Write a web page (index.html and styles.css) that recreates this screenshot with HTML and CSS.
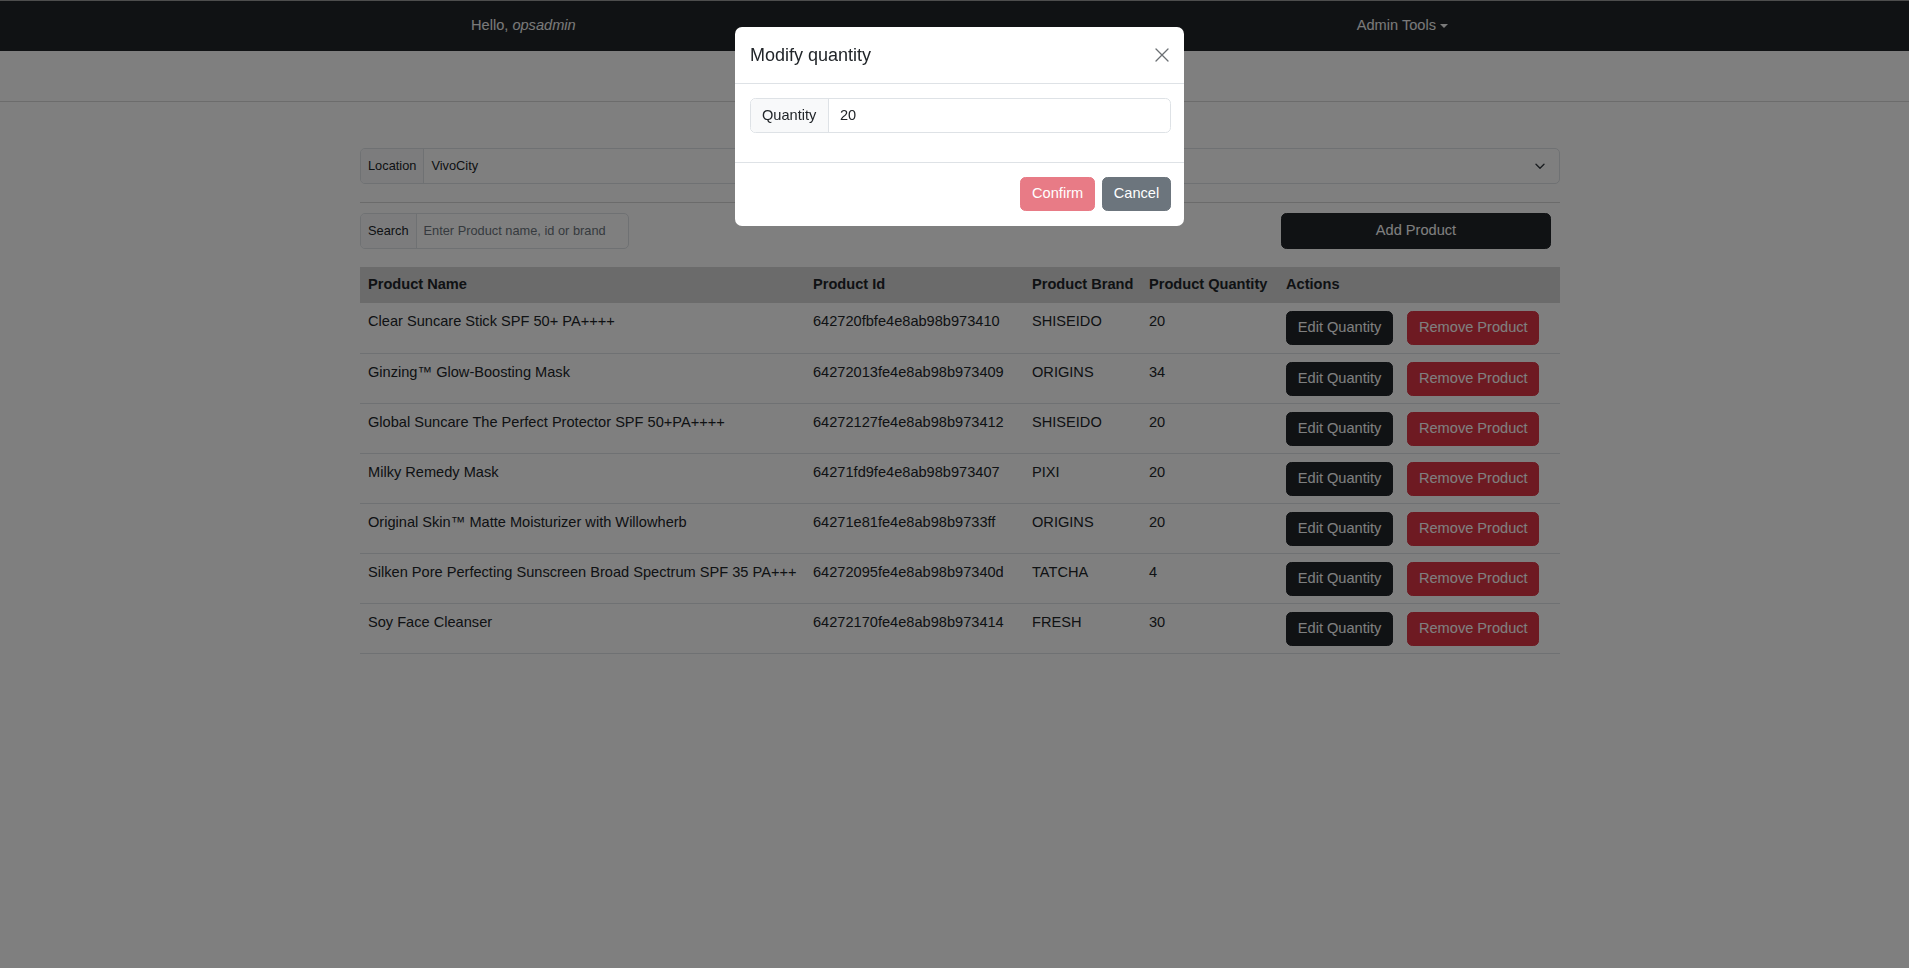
FILE: index.html
```html
<!DOCTYPE html>
<html lang="en">
<head>
<meta charset="utf-8">
<title>Inventory</title>
<link rel="stylesheet" href="styles.css">
</head>
<body>
<nav class="navbar">
  <span class="nav-text">Hello, <em>opsadmin</em></span>
  <span class="nav-text dropdown">Admin Tools <span class="caret"></span></span>
</nav>
<div class="subbar"></div>

<main class="content">
  <div class="input-group loc-group">
    <span class="ig-label">Location</span>
    <div class="ig-select">
      <span>VivoCity</span>
      <svg class="chev" width="10" height="7" viewBox="0 0 10 7"><path d="M1 1.2 5 5.2 9 1.2" fill="none" stroke="#343a40" stroke-width="1.4" stroke-linecap="round" stroke-linejoin="round"/></svg>
    </div>
  </div>
  <div class="divider"></div>
  <div class="toolbar">
    <div class="input-group search-group">
      <span class="ig-label">Search</span>
      <span class="ig-input placeholder">Enter Product name, id or brand</span>
    </div>
    <button class="btn btn-dark add-btn">Add Product</button>
  </div>

  <table class="products">
    <colgroup>
      <col class="c-name"><col class="c-id"><col class="c-brand"><col class="c-qty"><col class="c-act">
    </colgroup>
    <thead>
      <tr><th>Product Name</th><th>Product Id</th><th>Product Brand</th><th>Product Quantity</th><th>Actions</th></tr>
    </thead>
    <tbody>
      <tr><td>Clear Suncare Stick SPF 50+ PA++++</td><td>642720fbfe4e8ab98b973410</td><td>SHISEIDO</td><td>20</td><td><div class="actions"><button class="btn btn-dark">Edit Quantity</button><button class="btn btn-danger">Remove Product</button></div></td></tr>
      <tr><td>Ginzing™ Glow-Boosting Mask</td><td>64272013fe4e8ab98b973409</td><td>ORIGINS</td><td>34</td><td><div class="actions"><button class="btn btn-dark">Edit Quantity</button><button class="btn btn-danger">Remove Product</button></div></td></tr>
      <tr><td>Global Suncare The Perfect Protector SPF 50+PA++++</td><td>64272127fe4e8ab98b973412</td><td>SHISEIDO</td><td>20</td><td><div class="actions"><button class="btn btn-dark">Edit Quantity</button><button class="btn btn-danger">Remove Product</button></div></td></tr>
      <tr><td>Milky Remedy Mask</td><td>64271fd9fe4e8ab98b973407</td><td>PIXI</td><td>20</td><td><div class="actions"><button class="btn btn-dark">Edit Quantity</button><button class="btn btn-danger">Remove Product</button></div></td></tr>
      <tr><td>Original Skin™ Matte Moisturizer with Willowherb</td><td>64271e81fe4e8ab98b9733ff</td><td>ORIGINS</td><td>20</td><td><div class="actions"><button class="btn btn-dark">Edit Quantity</button><button class="btn btn-danger">Remove Product</button></div></td></tr>
      <tr><td>Silken Pore Perfecting Sunscreen Broad Spectrum SPF 35 PA+++</td><td>64272095fe4e8ab98b97340d</td><td>TATCHA</td><td>4</td><td><div class="actions"><button class="btn btn-dark">Edit Quantity</button><button class="btn btn-danger">Remove Product</button></div></td></tr>
      <tr><td>Soy Face Cleanser</td><td>64272170fe4e8ab98b973414</td><td>FRESH</td><td>30</td><td><div class="actions"><button class="btn btn-dark">Edit Quantity</button><button class="btn btn-danger">Remove Product</button></div></td></tr>
    </tbody>
  </table>
</main>

<div class="backdrop">
  <div class="modal">
    <div class="modal-header">
      <h5 class="modal-title">Modify quantity</h5>
      <svg class="close" width="14" height="14" viewBox="0 0 14 14"><path d="M1 1 13 13M13 1 1 13" stroke="#6b6f73" stroke-width="1.3" stroke-linecap="round"/></svg>
    </div>
    <div class="modal-body">
      <div class="input-group qty-group">
        <span class="ig-label">Quantity</span>
        <span class="ig-input">20</span>
      </div>
    </div>
    <div class="modal-footer">
      <button class="btn btn-danger disabled">Confirm</button>
      <button class="btn btn-secondary">Cancel</button>
    </div>
  </div>
</div>
</body>
</html>
```

FILE: styles.css
```css
* { box-sizing: border-box; }

body {
  margin: 0;
  background: #ffffff;
  color: #212529;
  font-family: "Liberation Sans", Arial, sans-serif;
  font-size: 14.6px;
  line-height: 1.5;
}

.navbar {
  height: 51px;
  background: #212529;
  border-top: 1px solid #9a9a9a;
  display: flex;
  align-items: center;
  justify-content: space-between;
  padding: 0 461px 0 471px;
  color: #f4f4f4;
}
.nav-text { font-size: 14.6px; }
.nav-text em { font-style: italic; }
.dropdown { display: inline-flex; align-items: center; gap: 4px; }
.caret {
  width: 0; height: 0;
  border-left: 4px solid transparent;
  border-right: 4px solid transparent;
  border-top: 4px solid #f4f4f4;
  margin-top: 1px;
}

.subbar {
  height: 51px;
  border-bottom: 1px solid #d8d8d8;
}

.content {
  width: 1200px;
  margin: 46px 0 0 360px;
}

.input-group {
  display: flex;
  height: 36px;
  border: 1px solid #dee2e6;
  border-radius: 5px;
  overflow: hidden;
  background: #fff;
}
.ig-label {
  display: flex;
  align-items: center;
  background: #f8f9fa;
  border-right: 1px solid #dee2e6;
  padding: 0 7px;
  font-size: 12.8px;
  color: #212529;
}
.ig-select {
  flex: 1;
  display: flex;
  align-items: center;
  justify-content: space-between;
  padding: 0 14px 0 7px;
  font-size: 12.8px;
}
.ig-input {
  flex: 1;
  display: flex;
  align-items: center;
  padding: 0 7px;
  font-size: 12.8px;
}
.placeholder { color: #6c757d; }

.divider {
  height: 1px;
  background: #d6d6d6;
  margin: 18px 0 10px;
}

.toolbar {
  display: flex;
  justify-content: space-between;
  align-items: flex-start;
  padding-right: 9px;
}
.search-group { width: 269px; }

.btn {
  font-family: inherit;
  font-size: 14.6px;
  line-height: 21.6px;
  padding: 5.4px 10.8px;
  border: 1px solid transparent;
  border-radius: 5.4px;
  color: #fff;
  cursor: pointer;
  white-space: nowrap;
}
.btn-dark { background: #212529; border-color: #212529; }
.btn-danger { background: #dc3545; border-color: #dc3545; }
.btn-secondary { background: #6c757d; border-color: #6c757d; }
.btn.disabled { opacity: .65; }

.add-btn { width: 270px; height: 36px; }

.products {
  width: 1200px;
  margin-top: 18px;
  border-collapse: collapse;
  table-layout: fixed;
}
.c-name { width: 445px; }
.c-id { width: 219px; }
.c-brand { width: 117px; }
.c-qty { width: 137px; }
.c-act { width: 282px; }

.products th {
  background: #d6d6d6;
  text-align: left;
  font-weight: 700;
  padding: 7px 8px;
  height: 36px;
  white-space: nowrap;
}
.products td {
  padding: 8px 8px 7px;
  vertical-align: top;
  border-bottom: 1px solid #dee2e6;
  height: 50px;
  white-space: nowrap;
}
.actions { display: flex; gap: 14px; }
.actions .btn { height: 34px; }

.backdrop {
  position: fixed;
  inset: 0;
  background: rgba(0, 0, 0, .5);
}
.modal {
  position: absolute;
  top: 27px;
  left: 735px;
  width: 449px;
  background: #fff;
  border-radius: 7px;
  overflow: hidden;
}
.modal-header {
  display: flex;
  align-items: center;
  justify-content: space-between;
  padding: 14px 14px 14px 15px;
  border-bottom: 1px solid #dee2e6;
  height: 57px;
}
.modal-title {
  margin: 0;
  font-size: 18px;
  font-weight: 500;
  line-height: 27px;
}
.close { margin-right: 1px; }
.modal-body {
  padding: 14px 13px 29px 15px;
}
.qty-group { border-radius: 5.4px; height: 35px; }
.qty-group .ig-label { font-size: 14.6px; padding: 0 11px; width: 78px; }
.qty-group .ig-input { font-size: 14.6px; padding: 0 11px; color: #212529; }
.modal-footer {
  display: flex;
  justify-content: flex-end;
  gap: 7px;
  padding: 14px 13px 15px;
  border-top: 1px solid #dee2e6;
}
.modal-footer .btn { height: 34px; }
```
